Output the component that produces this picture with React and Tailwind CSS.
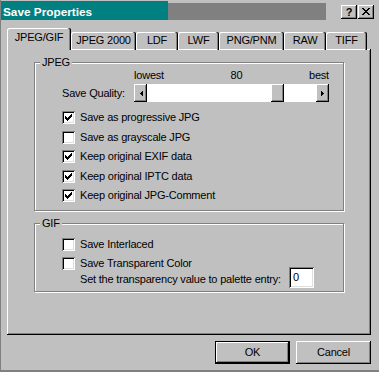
import React from "react";

const CHECK = ["......#", ".....##", "#...###", "##.###.", "#####..", ".###...", "..#...."];
const CLOSE = ["##....##", ".##..##.", "..####..", "...##...", "..####..", ".##..##.", "##....##"];
const LEFT = ["..#", ".##", "###", ".##", "..#"];
const RIGHT = ["#..", "##.", "###", "##.", "#.."];

function Pix({ rows }) {
  const rects = [];
  rows.forEach((r, y) =>
    [...r].forEach((c, x) => {
      if (c === "#") rects.push(<rect key={x + "-" + y} x={x} y={y} width="1" height="1" />);
    })
  );
  return (
    <svg
      width={rows[0].length}
      height={rows.length}
      viewBox={`0 0 ${rows[0].length} ${rows.length}`}
      shapeRendering="crispEdges"
      fill="#000"
      className="block"
    >
      {rects}
    </svg>
  );
}

const RAISED =
  "shadow-[inset_-1px_-1px_0_#000,inset_1px_1px_0_#fff,inset_-2px_-2px_0_#808080]";
const SUNKEN =
  "shadow-[inset_1px_1px_0_#808080,inset_-1px_-1px_0_#fff,inset_2px_2px_0_#000,inset_-2px_-2px_0_#dfdfdf]";

function Check({ checked }) {
  return (
    <div className={`w-[13px] h-[13px] shrink-0 bg-white flex items-center justify-center ${SUNKEN}`}>
      {checked && <Pix rows={CHECK} />}
    </div>
  );
}

function CheckRow({ checked, label }) {
  return (
    <div className="h-[13px] flex items-center gap-[5px]">
      <Check checked={checked} />
      <span className="leading-[13px] whitespace-nowrap">{label}</span>
    </div>
  );
}

function Group({ label, className, children }) {
  return (
    <div
      className={`relative border border-[#808080] shadow-[inset_1px_1px_0_#fff,1px_1px_0_#fff] ${className}`}
    >
      <span className="absolute left-[5px] top-[-7px] px-[2px] leading-[13px] bg-[#c0c0c0]">{label}</span>
      {children}
    </div>
  );
}

const TABS = [
  { label: "JPEG 2000", w: "w-[65px]" },
  { label: "LDF", w: "w-[42px]" },
  { label: "LWF", w: "w-[41px]" },
  { label: "PNG/PNM", w: "w-[65px]" },
  { label: "RAW", w: "w-[42px]" },
  { label: "TIFF", w: "w-[41px]" },
];

const TAB_SHADOW =
  "shadow-[inset_-1px_0_0_#000,inset_-2px_0_0_#808080,inset_1px_1px_0_#fff]";

export default function App() {
  return (
    <div className="w-[379px] h-[372px] bg-[#c0c0c0] border-l border-b-2 border-[#808080] font-['Liberation_Sans',Arial,sans-serif] text-[11px] tracking-[-0.2px] text-black flex flex-col overflow-hidden select-none">
      {/* Title bar */}
      <div className="mt-[1px] h-[19px] flex shrink-0">
        <div className="w-[167px] bg-[#008080] text-white font-bold text-[11.8px] tracking-normal pl-[2px] pt-[4px] flex items-center whitespace-nowrap">
          Save Properties
        </div>
        <div className="w-[158px] mt-[2px] bg-[#808080]" />
        <div className="ml-[15px] mt-[4px] flex gap-[1px]">
          <div className={`w-[16px] h-[14px] bg-[#c0c0c0] flex items-center justify-center font-bold text-[11px] tracking-normal leading-none ${RAISED}`}>
            ?
          </div>
          <div className={`w-[16px] h-[14px] bg-[#c0c0c0] flex items-center justify-center pb-[1px] ${RAISED}`}>
            <Pix rows={CLOSE} />
          </div>
        </div>
      </div>

      {/* Tabs */}
      <div className="mt-[8px] ml-[6px] h-[22px] flex items-end relative z-10 shrink-0">
        <div className={`w-[64px] h-[22px] bg-[#c0c0c0] rounded-t-[2px] flex justify-center pt-[3px] leading-[13px] ${TAB_SHADOW}`}>
          JPEG/GIF
        </div>
        {TABS.map((t) => (
          <div
            key={t.label}
            className={`${t.w} h-[18px] rounded-t-[2px] flex justify-center pt-[2px] leading-[13px] whitespace-nowrap ${TAB_SHADOW}`}
          >
            {t.label}
          </div>
        ))}
      </div>

      {/* Panel */}
      <div className="ml-[6px] -mt-px w-[364px] h-[286px] shrink-0 shadow-[inset_-1px_-1px_0_#000,inset_1px_1px_0_#fff,inset_-2px_-2px_0_#808080] pl-[27px] pt-[13px] flex flex-col">
        <Group label="JPEG" className="w-[310px] h-[149px] pl-[27px] pt-[6px] flex flex-col">
          <div className="ml-[72px] w-[195px] h-[13px] flex justify-between leading-[13px]">
            <span>lowest</span>
            <span>80</span>
            <span>best</span>
          </div>
          <div className="mt-[2px] h-[18px] flex items-center">
            <span className="w-[72px] leading-[13px] whitespace-nowrap">Save Quality:</span>
            <div className="w-[195px] h-[18px] bg-white flex">
              <div className={`w-[13px] h-[18px] bg-[#c0c0c0] flex items-center justify-center pl-[1px] ${RAISED}`}>
                <Pix rows={LEFT} />
              </div>
              <div className="w-[124px]" />
              <div className={`w-[13px] h-[18px] bg-[#c0c0c0] ${RAISED}`} />
              <div className="flex-1" />
              <div className={`w-[13px] h-[18px] bg-[#c0c0c0] flex items-center justify-center ${RAISED}`}>
                <Pix rows={RIGHT} />
              </div>
            </div>
          </div>
          <div className="mt-[9px] flex flex-col gap-[6.5px]">
            <CheckRow checked label="Save as progressive JPG" />
            <CheckRow label="Save as grayscale JPG" />
            <CheckRow checked label="Keep original EXIF data" />
            <CheckRow checked label="Keep original IPTC data" />
            <CheckRow checked label="Keep original JPG-Comment" />
          </div>
        </Group>

        <Group label="GIF" className="mt-[12px] w-[310px] h-[69px] pl-[27px] pt-[14px] flex flex-col">
          <CheckRow label="Save Interlaced" />
          <div className="mt-[6px]">
            <CheckRow label="Save Transparent Color" />
          </div>
          <div className="-mt-[3px] pl-[18px] flex items-start">
            <span className="w-[209px] mt-[6px] leading-[13px] whitespace-nowrap">
              Set the transparency value to palette entry:
            </span>
            <div className={`w-[25px] h-[21px] bg-white pl-[4px] flex items-center leading-[13px] ${SUNKEN}`}>
              0
            </div>
          </div>
        </Group>
      </div>

      {/* Buttons */}
      <div className="mt-[6px] ml-[214px] flex gap-[6px] shrink-0">
        <div className={`w-[75px] h-[23px] border border-black bg-[#c0c0c0] flex items-center justify-center leading-[13px] ${RAISED}`}>
          OK
        </div>
        <div className={`w-[75px] h-[23px] bg-[#c0c0c0] flex items-center justify-center leading-[13px] ${RAISED}`}>
          Cancel
        </div>
      </div>
    </div>
  );
}
